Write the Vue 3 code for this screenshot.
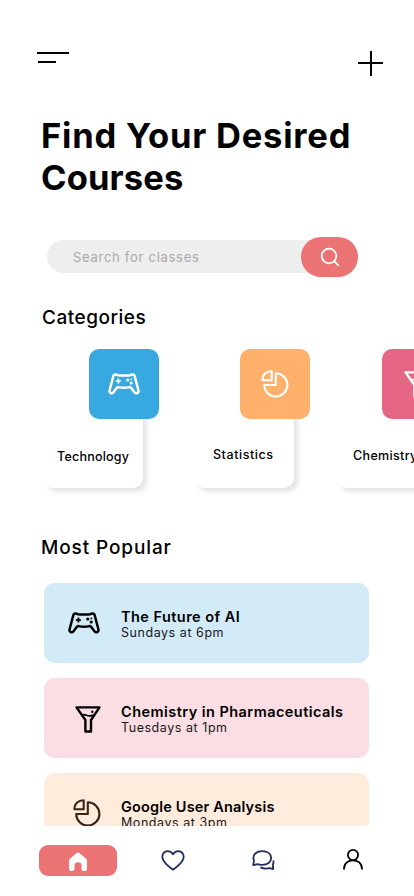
<script setup>
const categories = [
  { name: 'Technology', kind: 'game', tone: 'blue' },
  { name: 'Statistics', kind: 'pie', tone: 'orange' },
  { name: 'Chemistry', kind: 'funnel', tone: 'pink' },
]
const courses = [
  { title: 'The Future of AI', time: 'Sundays at 6pm', kind: 'game', tone: 'blue' },
  { title: 'Chemistry in Pharmaceuticals', time: 'Tuesdays at 1pm', kind: 'funnel', tone: 'pink' },
  { title: 'Google User Analysis', time: 'Mondays at 3pm', kind: 'pie', tone: 'orange' },
]
</script>

<template>
  <svg class="defs" width="0" height="0" aria-hidden="true">
    <symbol id="game" viewBox="0 0 32 22">
      <path d="M7.4 1.6Q5.8 1.6 5.3 3.2L1.6 17.3C1 19.9 3.8 21.3 5.5 19.2L8.7 15Q9.4 14.1 10.6 14.1Q16 15.2 21.4 14.1Q22.6 14.1 23.3 15L26.5 19.2C28.2 21.3 31 19.9 30.4 17.3L26.7 3.2Q26.2 1.6 24.6 1.6Q23.4 1.5 22.2 2.3Q16 2.7 9.8 2.3Q8.6 1.5 7.4 1.6Z" fill="none" stroke="currentColor" stroke-width="2.5" stroke-linejoin="round" />
      <path d="M10.4 5.6v5M7.9 8.1h5" stroke="currentColor" stroke-width="1.8" />
      <g fill="currentColor"><circle cx="19.8" cy="7" r="1.6" /><circle cx="23.4" cy="6.4" r=".9" /><circle cx="23.2" cy="10" r="1.6" /></g>
    </symbol>
    <symbol id="pie" viewBox="0 0 28 28">
      <path d="M10.7 1.3v9H1.4C1.2 5 5 1.4 10.7 1.3ZM14.8 3.3A11.6 11.6 0 1 1 3.2 15H14.8Z" fill="none" stroke="currentColor" stroke-width="2.1" stroke-linejoin="round" />
    </symbol>
    <symbol id="funnel" viewBox="0 0 26 27">
      <path d="M1.5 1.4H24.5L16 14V25.5H10.4V14Z" fill="none" stroke="currentColor" stroke-width="2.4" stroke-linejoin="round" />
      <path d="M6.3 9.1Q9 8 11.5 9.3T19 9.1" fill="none" stroke="currentColor" stroke-width="1.7" />
      <circle cx="17.3" cy="5.8" r="1.2" fill="currentColor" />
    </symbol>
  </svg>
  <main class="screen">
    <header class="top">
      <svg class="menu" viewBox="0 0 32 12"><path d="M0 2h32M1 11h18" /></svg>
      <svg class="plus" viewBox="0 0 25 25"><path d="M0 12h25M13 0v25" /></svg>
    </header>
    <h1><span class="line-one">Find Your Desired</span><br /><span class="line-two">Courses</span></h1>
    <div class="search">
      <span class="placeholder">Search for classes</span>
      <button aria-label="Search">
        <svg viewBox="0 0 20 20"><circle cx="9" cy="9" r="7.3" /><path d="m14.3 14.3 4 4" /></svg>
      </button>
    </div>
    <h2 class="cat-heading">Categories</h2>
    <section class="categories">
      <article v-for="c in categories" :key="c.name" class="category" :class="c.kind">
        <div class="tile" :class="c.tone"><svg class="icon" :class="c.kind"><use :href="'#' + c.kind" /></svg></div>
        <span>{{ c.name }}</span>
      </article>
    </section>
    <h2 class="pop-heading">Most Popular</h2>
    <section class="courses">
      <article v-for="c in courses" :key="c.title" class="course" :class="c.tone">
        <div class="picture"><svg class="icon" :class="c.kind"><use :href="'#' + c.kind" /></svg></div>
        <div class="copy"><h3>{{ c.title }}</h3><p>{{ c.time }}</p></div>
      </article>
    </section>
    <nav>
      <a class="home"><svg viewBox="0 0 18 19"><path d="M1.2 6.5 7.2 1.2Q9 0 10.8 1.2L16.8 6.5Q18 7.5 18 9V17Q18 19 16 19H14.5Q12.5 19 12.5 17V13.5Q12.5 10.3 9 10.3T5.5 13.5V17Q5.5 19 3.5 19H2Q0 19 0 17V9Q0 7.5 1.2 6.5Z" /></svg></a>
      <a class="heart"><svg viewBox="0 0 24 21"><path d="M12 19.7C8.5 17.2 4.8 14 2.8 11C-.4 6.2 2.2 1.1 6.8 1.1Q10.2 1.1 12 4.2Q13.8 1.1 17.2 1.1C21.8 1.1 24.4 6.2 21.2 11C19.2 14 15.5 17.2 12 19.7Z" /></svg></a>
      <a class="chat"><svg viewBox="0 0 23 20"><path d="M1.2 15.2 2 10.8C-.2 5.5 4 1.1 10 1.1S19.2 4.2 19.2 8.1S15.4 14.8 10.2 14.8Q7.5 14.9 5.6 14.2Z" /><path d="M21.2 10.5Q22 12.5 20.9 14.3L21.2 19 17.5 18.2Q12.5 19.4 8.4 17.4" /></svg></a>
      <a class="user"><svg viewBox="0 0 20 21"><circle cx="10" cy="6" r="5.1" /><path d="M1 20.5v-.8C1 8.5 19 8.5 19 19.7v.8" /></svg></a>
    </nav>
  </main>
</template>

<style>
body { background: #fff; overflow: hidden; }
</style>
<style scoped>
* { box-sizing: border-box; }
.defs { display: block; height: 0; }
.screen { width: 414px; height: 896px; overflow: hidden; display: flex; flex-direction: column; background: #fff; color: #000; font-family: Inter, "Liberation Sans", sans-serif; }
h1, h2, h3, p { margin: 0; }
.top { display: flex; justify-content: space-between; align-items: flex-start; height: 115px; padding: 51px 31px 0 37px; flex: none; }
.top svg { stroke: #000; stroke-width: 2; fill: none; }
.menu { width: 32px; height: 12px; }
.plus { width: 25px; height: 25px; }
h1 { height: 125px; padding-left: 41px; font-size: 34.5px; line-height: 42px; font-weight: 700; white-space: nowrap; flex: none; }
.line-one { letter-spacing: .78px; }
.line-two { letter-spacing: .15px; }
.search { display: flex; align-items: center; justify-content: space-between; width: 311px; height: 33px; margin-left: 47px; padding-left: 26px; border-radius: 17px; background: #eee; flex: none; }
.placeholder { color: #aaa; font-size: 13px; letter-spacing: .72px; line-height: 31px; padding-top: 2px; }
button { display: flex; align-items: center; justify-content: center; width: 57px; height: 40px; margin: 0; padding: 1px 0 0; border: 0; border-radius: 20px; background: #eb7373; flex: none; }
button svg { width: 20px; height: 20px; stroke: #fff; stroke-width: 1.8; fill: none; stroke-linecap: round; }
h2 { font-size: 19px; font-weight: 500; line-height: 24px; flex: none; }
.cat-heading { margin: 33px 0 19px 42px; letter-spacing: .5px; }
.categories { display: flex; width: 480px; height: 139px; padding-left: 43px; align-items: flex-end; flex: none; }
.category { width: 100px; height: 134px; margin-right: 51px; border-radius: 10px; background: #fff; box-shadow: 4px 4px 4px rgba(0,0,0,.1); flex: none; }
.category.pie { margin-right: 42px; }
.tile { display: flex; align-items: center; justify-content: center; width: 70px; height: 70px; margin: -5px 0 0 46px; border-radius: 10px; }
.tile.blue { background: rgba(41,163,222,.93); }
.tile.orange { background: rgba(255,170,96,.93); }
.tile.pink { background: rgba(227,91,124,.93); }
.icon { display: block; color: #fff; overflow: visible; }
.icon.game { width: 32px; height: 22px; }
.icon.pie { width: 28px; height: 28px; }
.icon.funnel { width: 26px; height: 27px; }
.category > span { display: block; width: max-content; margin: 28px 0 0 14px; font-size: 12.5px; line-height: 20px; font-weight: 500; letter-spacing: .22px; }
.category.pie > span { margin: 26px 0 0 19px; letter-spacing: .55px; }
.category.funnel > span { margin: 27px 0 0 17px; letter-spacing: .35px; }
.pop-heading { margin: 48px 0 23px 41px; letter-spacing: .88px; }
.courses { display: flex; flex-direction: column; gap: 15px; height: 243px; padding-left: 44px; overflow: hidden; flex: none; }
.course { display: flex; width: 325px; height: 80px; border-radius: 11px; flex: none; }
.course.blue { background: #d3eaf7; }
.course.pink { background: #fadee3; }
.course.orange { background: #ffecdd; }
.picture { display: flex; align-items: center; justify-content: center; width: 77px; padding-left: 2px; }
.picture .icon { color: #000; }
.picture .icon.pie { color: #3c2216; margin-left: 6px; margin-top: -1px; }
.picture .icon.funnel { margin-left: 8px; margin-top: 2px; }
.copy { padding-top: 26px; }
h3 { font-size: 14.5px; line-height: 16px; font-weight: 600; letter-spacing: .45px; white-space: nowrap; }
.orange h3 { letter-spacing: .17px; }
p { font-size: 12.5px; line-height: 16px; letter-spacing: .55px; color: #171717; }
nav { display: flex; align-items: center; height: 68px; padding-left: 39px; flex: none; }
nav a { display: flex; align-items: center; justify-content: center; height: 31px; }
nav svg { fill: none; stroke-width: 1.8; stroke-linejoin: round; flex: none; }
.home { width: 78px; background: #eb7373; border-radius: 9px; }
.home svg { width: 18px; height: 19px; fill: #fff; margin-top: 2px; }
.heart { width: 24px; margin-left: 44px; }
.heart svg { width: 24px; height: 21px; stroke: #242c59; margin-top: 1px; }
.chat { width: 23px; margin-left: 67px; }
.chat svg { width: 23px; height: 20px; stroke: #242c59; }
.user { width: 20px; margin-left: 68px; }
.user svg { width: 20px; height: 21px; stroke: #000; stroke-width: 1.8; margin-top: -2px; }
</style>
